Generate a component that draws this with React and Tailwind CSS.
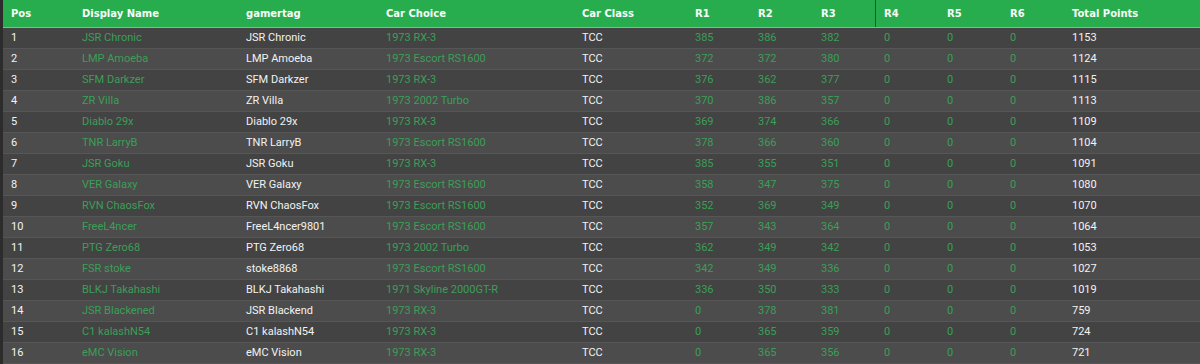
import React from 'react';

const rows = [
  ['1', 'JSR Chronic', 'JSR Chronic', '1973 RX-3', '385', '386', '382', '1153'],
  ['2', 'LMP Amoeba', 'LMP Amoeba', '1973 Escort RS1600', '372', '372', '380', '1124'],
  ['3', 'SFM Darkzer', 'SFM Darkzer', '1973 RX-3', '376', '362', '377', '1115'],
  ['4', 'ZR Villa', 'ZR Villa', '1973 2002 Turbo', '370', '386', '357', '1113'],
  ['5', 'Diablo 29x', 'Diablo 29x', '1973 RX-3', '369', '374', '366', '1109'],
  ['6', 'TNR LarryB', 'TNR LarryB', '1973 Escort RS1600', '378', '366', '360', '1104'],
  ['7', 'JSR Goku', 'JSR Goku', '1973 RX-3', '385', '355', '351', '1091'],
  ['8', 'VER Galaxy', 'VER Galaxy', '1973 Escort RS1600', '358', '347', '375', '1080'],
  ['9', 'RVN ChaosFox', 'RVN ChaosFox', '1973 Escort RS1600', '352', '369', '349', '1070'],
  ['10', 'FreeL4ncer', 'FreeL4ncer9801', '1973 Escort RS1600', '357', '343', '364', '1064'],
  ['11', 'PTG Zero68', 'PTG Zero68', '1973 2002 Turbo', '362', '349', '342', '1053'],
  ['12', 'FSR stoke', 'stoke8868', '1973 Escort RS1600', '342', '349', '336', '1027'],
  ['13', 'BLKJ Takahashi', 'BLKJ Takahashi', '1971 Skyline 2000GT-R', '336', '350', '333', '1019'],
  ['14', 'JSR Blackened', 'JSR Blackend', '1973 RX-3', '0', '378', '381', '759'],
  ['15', 'C1 kalashN54', 'C1 kalashN54', '1973 RX-3', '0', '365', '359', '724'],
  ['16', 'eMC Vision', 'eMC Vision', '1973 RX-3', '0', '365', '356', '721'],
];

const cols = 'grid grid-cols-[71px_164px_140px_196px_113px_63px_63px_62px_64px_63px_62px_1fr]';
const headers = ['Pos', 'Display Name', 'gamertag', 'Car Choice', 'Car Class', 'R1', 'R2', 'R3', 'R4', 'R5', 'R6', 'Total Points'];

const white = 'text-[#f2f2f2]';
const green = 'text-[#3b9f57]';

const App = () => {
  return (
    <div className="w-[1200px] h-[364px] overflow-hidden bg-[#2c2c2c] pl-[3px] font-['Roboto',sans-serif]">
      <div className={`${cols} h-[28px] bg-[#28ad4e] border-b border-[#5fcf7f] text-[10px] font-bold text-[#f7fcf8] font-['DejaVu_Sans',sans-serif]`}>
        {headers.map((h, i) => (
          <div
            key={h}
            className={`flex items-center pl-[8px] ${i === 8 ? 'border-l border-[#1c5a2c]' : ''}`}
          >
            {h}
          </div>
        ))}
      </div>
      {rows.map((r, idx) => (
        <div
          key={r[0]}
          className={`${cols} h-[21px] text-[11px] border-b border-[#565656] ${idx % 2 === 0 ? 'bg-[#434343]' : 'bg-[#4c4c4c]'}`}
        >
          <div className={`flex items-center pl-[8px] ${white}`}>{r[0]}</div>
          <div className={`flex items-center pl-[8px] ${green}`}>{r[1]}</div>
          <div className={`flex items-center pl-[8px] ${white}`}>{r[2]}</div>
          <div className={`flex items-center pl-[8px] ${green}`}>{r[3]}</div>
          <div className={`flex items-center pl-[8px] ${white}`}>TCC</div>
          <div className={`flex items-center pl-[8px] ${green}`}>{r[4]}</div>
          <div className={`flex items-center pl-[8px] ${green}`}>{r[5]}</div>
          <div className={`flex items-center pl-[8px] ${green}`}>{r[6]}</div>
          <div className={`flex items-center pl-[9px] ${green}`}>0</div>
          <div className={`flex items-center pl-[8px] ${green}`}>0</div>
          <div className={`flex items-center pl-[8px] ${green}`}>0</div>
          <div className={`flex items-center pl-[8px] ${white}`}>{r[7]}</div>
        </div>
      ))}
    </div>
  );
};

export default App;
